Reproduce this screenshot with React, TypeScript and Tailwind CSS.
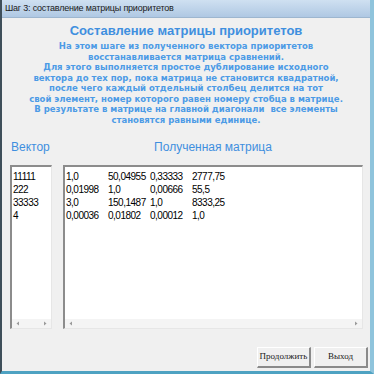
const PARAGRAPH = [
  'На этом шаге из полученного вектора приоритетов',
  'восстанавливается матрица сравнений.',
  'Для этого выполняется простое дублирование исходного',
  'вектора до тех пор, пока матрица не становится квадратной,',
  'после чего каждый отдельный столбец делится на тот',
  'свой элемент, номер которого равен номеру стобца в матрице.',
  'В результате в матрице на главной диагонали  все элементы',
  'становятся равными единице.',
]

const VECTOR = ['11111', '222', '33333', '4']

const MATRIX = [
  ['1,0', '50,04955', '0,33333', '2777,75'],
  ['0,01998', '1,0', '0,00666', '55,5'],
  ['3,0', '150,1487', '1,0', '8333,25'],
  ['0,00036', '0,01802', '0,00012', '1,0'],
]

export default function App() {
  return (
    <div
      className="w-[374px] h-[374px] flex flex-col bg-[#f0f0f0] border-l-2 border-l-[#3f4f5a] border-r-[4px] border-r-[#8fc4dc] border-b-[3px] border-b-[#4ea2c2] overflow-hidden"
      style={{ fontFamily: '"Liberation Sans", Arial, sans-serif' }}
    >
      {/* Title bar */}
      <div className="h-[18px] shrink-0 flex items-center px-[3px] bg-gradient-to-b from-[#cfe0f1] to-[#afc8e3] border-b border-[#9db6cf]">
        <span className="text-[9px] text-[#1b1b1b] tracking-[-0.2px]">Шаг 3: составление матрицы приоритетов</span>
      </div>

      {/* Heading */}
      <div className="pt-[4px] text-center text-[13px] leading-[18px] font-bold text-[#3f8fdf]">
        Составление матрицы приоритетов
      </div>

      {/* Description */}
      <div className="mt-[1px] text-center text-[8.5px] leading-[10.5px] font-bold text-[#4c9be6]" style={{ fontFamily: '"DejaVu Sans", sans-serif' }}>
        {PARAGRAPH.map((line, i) => (
          <div key={i} className="whitespace-pre">{line}</div>
        ))}
      </div>

      {/* Labels */}
      <div className="mt-[15px] flex text-[12px] leading-[14px] text-[#3f8fdf]">
        <span className="pl-[9px] w-[61px]">Вектор</span>
        <span className="w-[300px] text-center">Полученная матрица</span>
      </div>

      {/* Lists */}
      <div className="mt-[11px] flex gap-[11px] pl-[8px] h-[164px] text-[10px] leading-[13px] tracking-[-0.5px] text-black">
        <ListBox width="w-[42px]">
          {VECTOR.map((v) => (
            <div key={v} className="pl-[1px]">{v}</div>
          ))}
        </ListBox>
        <ListBox width="w-[300px]">
          {MATRIX.map((row, i) => (
            <div key={i} className="flex pl-[1px]">
              {row.map((cell, j) => (
                <span key={j} className="w-[42px] shrink-0">{cell}</span>
              ))}
            </div>
          ))}
        </ListBox>
      </div>

      {/* Buttons */}
      <div className="mt-[18px] flex justify-end gap-[3px] pr-[2px]" style={{ fontFamily: '"Liberation Serif", "Times New Roman", serif' }}>
        <WinButton label="Продолжить" />
        <WinButton label="Выход" />
      </div>
    </div>
  )
}

function ListBox({ width, children }: { width: string; children: React.ReactNode }) {
  return (
    <div className={`${width} h-full flex flex-col bg-white border-t-2 border-l-2 border-t-[#8c8c8c] border-l-[#8c8c8c] border-r border-b border-r-[#e6e6e6] border-b-[#e6e6e6]`}>
      <div className="flex-1 pt-[3px] overflow-hidden">{children}</div>
      <div className="h-[9px] flex items-center justify-between px-[4px] bg-[#f4f4f4] text-[#9a9a9a]">
        <svg width="4" height="5" viewBox="0 0 4 5"><path d="M3 0.5L0.5 2.5L3 4.5Z" fill="currentColor" /></svg>
        <svg width="4" height="5" viewBox="0 0 4 5"><path d="M1 0.5L3.5 2.5L1 4.5Z" fill="currentColor" /></svg>
      </div>
    </div>
  )
}

function WinButton({ label }: { label: string }) {
  return (
    <button className="w-[54px] h-[21px] flex items-center justify-center bg-[#f0f0f0] text-[9px] text-[#222] border-t border-l border-t-white border-l-white border-r-2 border-b-2 border-r-[#8a8a8a] border-b-[#8a8a8a]">
      {label}
    </button>
  )
}
